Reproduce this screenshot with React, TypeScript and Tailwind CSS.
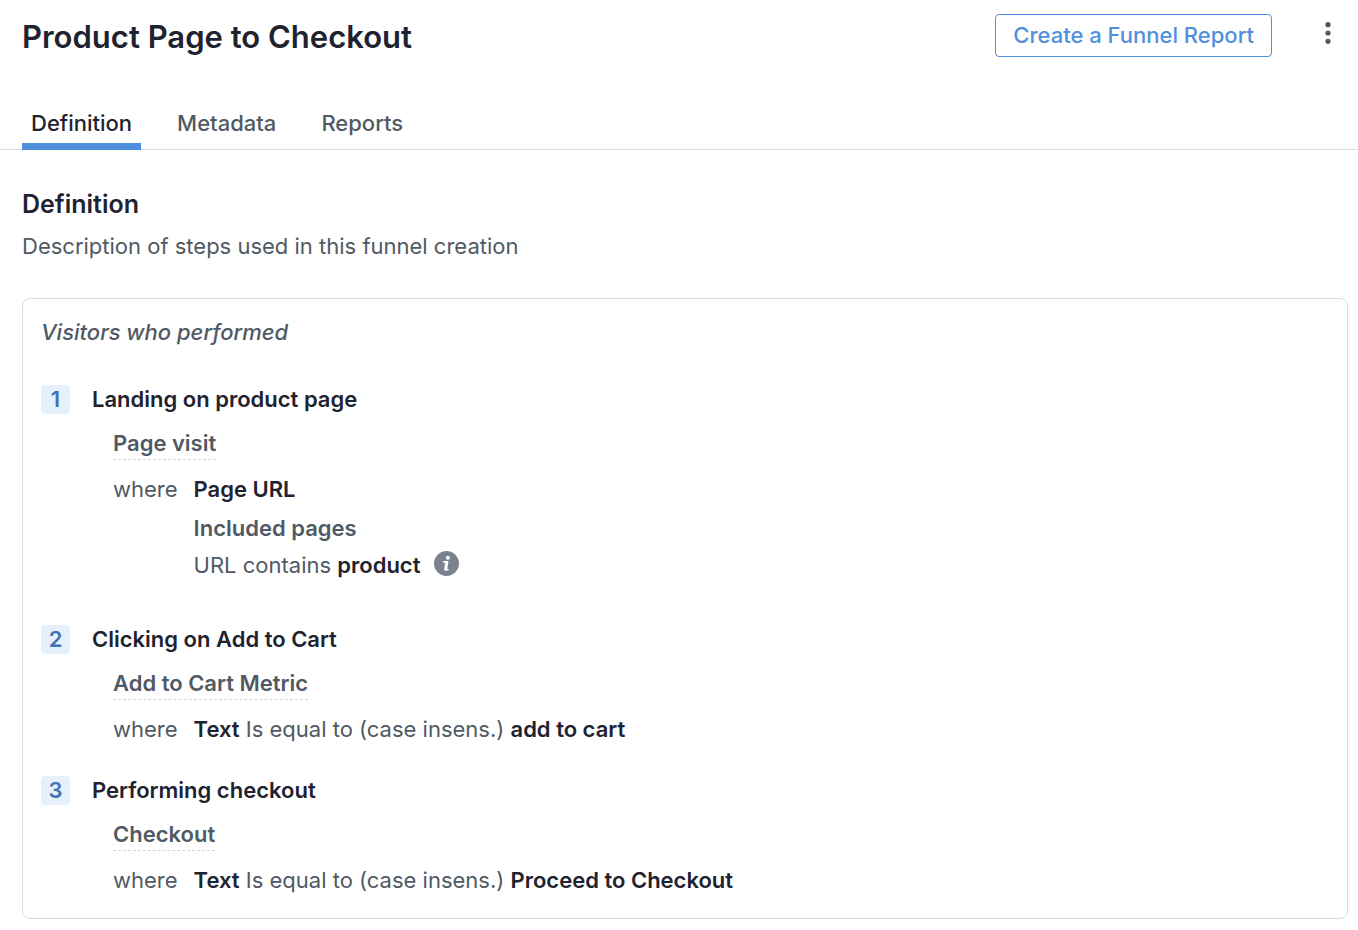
import React, { useState } from 'react';

interface Rule {
    attribute: string;
    operator?: string;
    value?: string;
    includedPages?: { operator: string; value: string };
}

interface FunnelStep {
    name: string;
    event: string;
    rule: Rule;
}

const tabs = ['Definition', 'Metadata', 'Reports'];

const steps: FunnelStep[] = [
    {
        name: 'Landing on product page',
        event: 'Page visit',
        rule: { attribute: 'Page URL', includedPages: { operator: 'URL contains', value: 'product' } }
    },
    {
        name: 'Clicking on Add to Cart',
        event: 'Add to Cart Metric',
        rule: { attribute: 'Text', operator: 'Is equal to (case insens.)', value: 'add to cart' }
    },
    {
        name: 'Performing checkout',
        event: 'Checkout',
        rule: { attribute: 'Text', operator: 'Is equal to (case insens.)', value: 'Proceed to Checkout' }
    }
];

const MoreIcon: React.FC = () => (
    <svg width="6" height="24" viewBox="0 0 6 24" fill="currentColor" aria-hidden="true">
        <circle cx="3" cy="3.7" r="2.6" />
        <circle cx="3" cy="12" r="2.6" />
        <circle cx="3" cy="20.3" r="2.6" />
    </svg>
);

const InfoIcon: React.FC = () => (
    <svg width="25" height="25" viewBox="0 0 25 25" aria-hidden="true">
        <circle cx="12.5" cy="12.5" r="12.5" fill="#7a8290" />
        <circle cx="13.9" cy="6.7" r="2" fill="#fff" />
        <path d="M9.8 10.9h3.4M11.3 18.6h2.4" fill="none" stroke="#fff" strokeWidth="1.9" strokeLinecap="round" />
        <path d="M12.9 11.4l-1.3 6.6" fill="none" stroke="#fff" strokeWidth="3" strokeLinecap="round" />
    </svg>
);

const RuleDetails: React.FC<{ rule: Rule }> = ({ rule }) => {
    if (rule.includedPages) {
        return (
            <div className="pb-[13px]">
                <p className="font-semibold text-[#1f2330]">{rule.attribute}</p>
                <p className="mt-2.5 font-semibold text-[#505a64]">Included pages</p>
                <div className="mt-2 flex items-start gap-3.5">
                    <p>
                        {rule.includedPages.operator}{' '}
                        <strong className="font-semibold text-[#1f2330]">{rule.includedPages.value}</strong>
                    </p>
                    <button type="button" aria-label="More information">
                        <InfoIcon />
                    </button>
                </div>
            </div>
        );
    }

    return (
        <p>
            <strong className="font-semibold text-[#1f2330]">{rule.attribute}</strong> {rule.operator}{' '}
            <strong className="font-semibold text-[#1f2330]">{rule.value}</strong>
        </p>
    );
};

const App: React.FC = () => {
    const [activeTab, setActiveTab] = useState('Definition');

    return (
        <div className="min-h-screen bg-white font-['Inter',sans-serif] text-[22px] leading-[29px] text-[#505a64]">
            <header className="flex items-start justify-between pl-[22px] pr-[18px] pt-3.5">
                <h1 className="text-[31px] font-semibold leading-[46px] text-[#1f2330]">Product Page to Checkout</h1>
                <div className="flex items-start gap-11">
                    <button
                        type="button"
                        className="rounded-sm border border-[#4f8fdd] px-[17px] py-1.5 font-medium text-[#4f8fdd] hover:bg-blue-50"
                    >
                        Create a Funnel Report
                    </button>
                    <button type="button" aria-label="More options" className="flex h-[38px] w-6 items-center justify-center text-[#505a64]">
                        <MoreIcon />
                    </button>
                </div>
            </header>

            <nav role="tablist" className="mt-10 flex gap-[27px] border-b border-[#dcdde0] pl-[22px]">
                {tabs.map((tab) => (
                    <button
                        key={tab}
                        type="button"
                        role="tab"
                        aria-selected={activeTab === tab}
                        onClick={() => setActiveTab(tab)}
                        className={
                            activeTab === tab
                                ? '-mb-px border-b-[7px] border-[#4f8fdd] px-[9px] pb-[5px] pt-[9px] font-medium text-[#1f2330]'
                                : '-mb-px border-b-[7px] border-transparent px-[9px] pb-[5px] pt-[9px] font-medium'
                        }
                    >
                        {tab}
                    </button>
                ))}
            </nav>

            <main className="pb-3 pl-[22px] pr-2.5 pt-[38px]">
                <h2 className="text-[25px] font-semibold leading-8 text-[#1f2330]">Definition</h2>
                <p className="mt-3">Description of steps used in this funnel creation</p>

                <section className="mt-[37px] rounded-lg border border-[#d9dce3] px-[18px] pb-[23px] pt-[19px]">
                    <p className="font-medium italic">Visitors who performed</p>
                    <ol className="mt-[38px] space-y-8">
                        {steps.map((step, idx) => (
                            <li key={step.name} className="flex gap-[22px]">
                                <span className="h-[29px] w-[29px] shrink-0 rounded-sm bg-[#e6f0fa] text-center font-semibold text-[#4173b3]">
                                    {idx + 1}
                                </span>
                                <div>
                                    <h3 className="font-semibold text-[#1f2330]">{step.name}</h3>
                                    <div className="pl-[21px]">
                                        <div className="mt-[15px] flex">
                                            <span className="border-b border-dashed border-[#d3d5d9] pb-px font-semibold">{step.event}</span>
                                        </div>
                                        <div className="mt-[15px] flex gap-4">
                                            <span>where</span>
                                            <RuleDetails rule={step.rule} />
                                        </div>
                                    </div>
                                </div>
                            </li>
                        ))}
                    </ol>
                </section>
            </main>
        </div>
    );
};

export default App;
